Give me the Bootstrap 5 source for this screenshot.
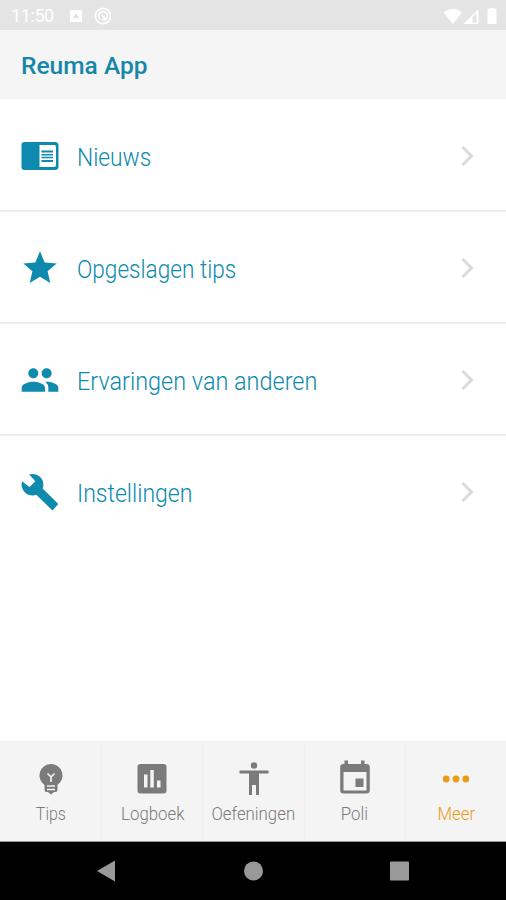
<!DOCTYPE html>
<html lang="nl">
<head>
<meta charset="utf-8">
<meta name="viewport" content="width=device-width, initial-scale=1">
<title>Reuma App</title>
<link href="https://cdn.jsdelivr.net/npm/bootstrap@5.3.0/dist/css/bootstrap.min.css" rel="stylesheet">
<style>
body{font-family:Roboto,"Liberation Sans",sans-serif;background:#fff;height:900px;overflow:hidden}
svg{display:block;flex:none}
.statusbar{height:30px;background:#e4e4e4;color:#fff;padding:1px 7px 0 11px;font-size:18px}
.clock{width:58px;letter-spacing:-.4px}
.appbar{height:69px;background:#f5f5f5;border-bottom:1px solid #f0f0f0;padding:3px 21px 0}
.appbar h1{font-size:24.5px;font-weight:500;color:#1686a9;letter-spacing:.02px}
.menu-list{padding-top:1px}
.menu-row{height:112px;padding:1px 26px 0 20px;color:#0d8aae;border:0;border-bottom:2px solid #ebebeb;border-radius:0}
.menu-row:last-child{border-bottom-color:transparent}
.menu-label{margin-left:17px;padding-top:3px;font-size:26.5px;font-weight:300;line-height:34px;white-space:nowrap;transform-origin:0 50%}
.tabs{height:100px;background:#f4f4f4;border-top:1px solid #f0f0f0}
.tab{color:#7b7b7b;padding-top:17px;border-left:1px solid #efefef;min-width:0;flex:1 1 0}
.tab:first-child{border-left-color:transparent}
.tab:last-child{color:#eb9c17}
.tab-label{font-size:19px;font-weight:300;line-height:24px;margin-top:3px;white-space:nowrap}
.sysbar{height:59px;background:#000;border-top:1px solid #999;padding-left:34px;padding-right:33px}
.w1{transform:scaleX(.86)}.w2{transform:scaleX(.853)}.w3{transform:scaleX(.884)}.w4{transform:scaleX(.87)}
.t1{transform:scaleX(.84)}.t2{transform:scaleX(.885)}
</style>
</head>
<body class="d-flex flex-column">
<div class="statusbar d-flex align-items-center">
  <span class="clock">11:50</span>
  <svg width="14" height="14" viewBox="0 0 14 14"><rect x="1" y="1" width="12" height="12" rx="1.5" fill="#fff"/><path d="M4 10l3-6 3 6-3-1.5z" fill="#ddd"/></svg>
  <svg class="ms-2" width="20" height="20" viewBox="0 0 20 20" fill="none" stroke="#fff"><circle cx="12" cy="10" r="7.700" stroke-width="1.7"/><path d="M9 13a4.300 4.300 0 1 1 6.500-.5M10.500 9l5 5M11 13.500h4" stroke-width="1.6"/></svg>
  <div class="d-flex ms-auto">
    <svg width="56" height="18" viewBox="0 0 56 18" fill="#fff"><path d="M.5 5.500Q10 -2 19 5.500L9.800 17z"/><path d="M20.500 17L35.500 2v15z"/><path d="M29.500 10l4-4v9.500h-4z" fill="#e4e4e4"/><path d="M45 2h2V1h5v1h2v15h-9z" transform="translate(-.5 0)"/></svg>
  </div>
</div>
<header class="appbar d-flex align-items-center"><h1 class="m-0">Reuma App</h1></header>
<main class="menu-list list-group list-group-flush flex-grow-1">
  <a href="#" class="menu-row d-flex align-items-center text-decoration-none">
    <svg width="40" height="40" viewBox="0 0 40 40" fill="currentColor"><path fill-rule="evenodd" d="M4.500 6h30.500a3.500 3.500 0 0 1 3.500 3.500v21a3.500 3.500 0 0 1-3.500 3.500h-30.500a3 3 0 0 1-3-3v-22a3 3 0 0 1 3-3zM19.500 9v22H34a2 2 0 0 0 2-2V11a2 2 0 0 0-2-2z"/><path d="M21.500 14.500h11.500v2H21.500zM21.500 18h11.500v1.500H21.500zM21.500 20.800h11.500v1.500H21.500zM21.500 24h11.500v2H21.500z"/></svg>
    <span class="menu-label w1">Nieuws</span>
    <svg class="ms-auto" width="20" height="24" viewBox="0 0 20 24" fill="none" stroke="#dadada" stroke-width="3"><path d="M2.500 3l9 9-9 9"/></svg>
  </a>
  <a href="#" class="menu-row d-flex align-items-center text-decoration-none">
    <svg width="40" height="40" viewBox="0 0 24 24" fill="currentColor"><path d="M12 17.270L18.180 21l-1.640-7.030L22 9.240l-7.190-.61L12 2 9.190 8.630 2 9.240l5.460 4.730L5.820 21z"/></svg>
    <span class="menu-label w2">Opgeslagen tips</span>
    <svg class="ms-auto" width="20" height="24" viewBox="0 0 20 24" fill="none" stroke="#dadada" stroke-width="3"><path d="M2.500 3l9 9-9 9"/></svg>
  </a>
  <a href="#" class="menu-row d-flex align-items-center text-decoration-none">
    <svg width="40" height="40" viewBox="0 0 24 24" fill="currentColor"><path d="M16 11c1.660 0 2.990-1.340 2.990-3S17.660 5 16 5s-3 1.340-3 3 1.340 3 3 3zM8 11c1.660 0 2.990-1.340 2.990-3S9.660 5 8 5 5 6.340 5 8s1.340 3 3 3zm0 2c-2.330 0-7 1.170-7 3.500V19h14v-2.500C15 14.170 10.330 13 8 13zm8 0c-.29 0-.62.020-.97.050C16.190 13.890 17 15.020 17 16.500V19h6v-2.500c0-2.330-4.670-3.500-7-3.500z"/></svg>
    <span class="menu-label w3">Ervaringen van anderen</span>
    <svg class="ms-auto" width="20" height="24" viewBox="0 0 20 24" fill="none" stroke="#dadada" stroke-width="3"><path d="M2.500 3l9 9-9 9"/></svg>
  </a>
  <a href="#" class="menu-row d-flex align-items-center text-decoration-none">
    <svg width="40" height="40" viewBox="0 0 24 24" fill="currentColor"><path d="M23 19.200L13.600 9.900c.9-2.300.4-5-1.500-6.900C10.500 1.300 7.800.8 5.500 1.500L9.200 5.500 5.700 9 1.200 5.500C.6 7.900 1 10.300 2.900 12.100c1.900 1.900 4.600 2.400 6.900 1.500l9.700 9.500z"/></svg>
    <span class="menu-label w4">Instellingen</span>
    <svg class="ms-auto" width="20" height="24" viewBox="0 0 20 24" fill="none" stroke="#dadada" stroke-width="3"><path d="M2.500 3l9 9-9 9"/></svg>
  </a>
</main>
<nav class="tabs d-flex">
  <div class="tab d-flex flex-column align-items-center">
    <svg width="40" height="40" viewBox="0 0 40 40"><path d="M20 5a11.500 11.500 0 0 0-6.500 21v5q0 2 2 2h1.500l3 2.500 3-2.500h1.500q2 0 2-2v-5A11.500 11.500 0 0 0 20 5z" fill="currentColor"/><path d="M20 23v-5l-3.500-3.500M20 18l3.500-3.500M16 27h8M16 30.500h8" fill="none" stroke="#f4f4f4" stroke-width="1.700"/></svg>
    <span class="tab-label t1">Tips</span>
  </div>
  <div class="tab d-flex flex-column align-items-center">
    <svg width="40" height="40" viewBox="0 0 40 40"><rect x="5.500" y="5" width="29" height="29.500" rx="3" fill="currentColor"/><path d="M12 15.500h3.500v13H12zM18.300 11h3.500v17.500h-3.500zM25 21.500h3.500v7H25z" fill="#f4f4f4"/></svg>
    <span class="tab-label t2">Logboek</span>
  </div>
  <div class="tab d-flex flex-column align-items-center">
    <svg width="40" height="40" viewBox="0 0 40 40" fill="currentColor"><circle cx="20" cy="6.500" r="3.200"/><path d="M5.500 11.500h29v3h-9.500V36h-3V26h-4v10h-3V14.500H5.500z"/></svg>
    <span class="tab-label t2">Oefeningen</span>
  </div>
  <div class="tab d-flex flex-column align-items-center">
    <svg width="40" height="40" viewBox="0 0 40 40" fill="currentColor"><path fill-rule="evenodd" d="M9.500 1.500h3.500V5h13V1.500h3.500V5h2a3.300 3.300 0 0 1 3.300 3.300v23a3.300 3.300 0 0 1-3.300 3.300h-23a3.300 3.300 0 0 1-3.300-3.300v-23A3.300 3.300 0 0 1 8.500 5h1zM8.500 13v18.500h23V13z"/><path d="M20.500 19.500h8v8.500h-8z"/></svg>
    <span class="tab-label t2">Poli</span>
  </div>
  <div class="tab d-flex flex-column align-items-center">
    <svg width="40" height="40" viewBox="0 0 40 40" fill="currentColor"><circle cx="10.200" cy="20" r="3.400"/><circle cx="20" cy="20" r="3.400"/><circle cx="29.800" cy="20" r="3.400"/></svg>
    <span class="tab-label t2">Meer</span>
  </div>
</nav>
<footer class="sysbar d-flex align-items-center justify-content-around">
  <svg width="22" height="22" viewBox="0 0 22 22" fill="#999"><path d="M1 11L19 .5v21z"/></svg>
  <svg width="22" height="22" viewBox="0 0 22 22" fill="#999"><circle cx="11.500" cy="11" r="9.500"/></svg>
  <svg width="22" height="22" viewBox="0 0 22 22" fill="#999"><rect x="1" y="1.500" width="19" height="19" rx="1"/></svg>
</footer>
<script src="https://cdn.jsdelivr.net/npm/bootstrap@5.3.0/dist/js/bootstrap.bundle.min.js"></script>
</body>
</html>
